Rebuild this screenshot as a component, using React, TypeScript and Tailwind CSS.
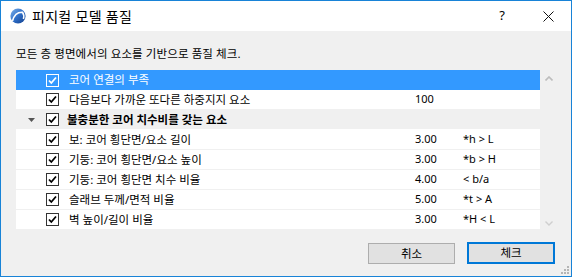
import { Fragment } from "react";

type Row = {
  label: string;
  value?: string;
  expr?: string;
  selected?: boolean;
  group?: boolean;
  child?: boolean;
};

const ROWS: Row[] = [
  { label: "코어 연결의 부족", selected: true },
  { label: "다음보다 가까운 또다른 하중지지 요소", value: "100" },
  { label: "불충분한 코어 치수비를 갖는 요소", group: true },
  { label: "보: 코어 횡단면/요소 길이", value: "3.00", expr: "*h > L", child: true },
  { label: "기둥: 코어 횡단면/요소 높이", value: "3.00", expr: "*b > H", child: true },
  { label: "기둥: 코어 횡단면 치수 비율", value: "4.00", expr: "< b/a", child: true },
  { label: "슬래브 두께/면적 비율", value: "5.00", expr: "*t > A", child: true },
  { label: "벽 높이/길이 비율", value: "3.00", expr: "*H < L", child: true },
];

function CheckBox({ light }: { light?: boolean }) {
  return (
    <span
      className={`flex h-[13px] w-[13px] items-center justify-center border ${
        light ? "border-white" : "border-[#333] bg-white"
      }`}
    >
      <svg width="11" height="11" viewBox="0 0 11 11">
        <path
          d="M2 5.5 L4.3 8 L9 2.5"
          fill="none"
          stroke={light ? "#fff" : "#000"}
          strokeWidth="1.8"
        />
      </svg>
    </span>
  );
}

function Logo() {
  return (
    <svg width="16" height="16" viewBox="0 0 16 16">
      <defs>
        <linearGradient id="lg" x1="0" y1="0" x2="1" y2="1">
          <stop offset="0" stopColor="#7fb2ea" />
          <stop offset="0.5" stopColor="#2f6fc8" />
          <stop offset="1" stopColor="#123f8c" />
        </linearGradient>
      </defs>
      <circle cx="8" cy="8" r="7.6" fill="url(#lg)" />
      <path d="M2.5 13 C4 7 8 4 12.5 4.2 C13.8 6 14 9 13.4 11" fill="none" stroke="#fff" strokeWidth="1.6" />
    </svg>
  );
}

export default function App() {
  return (
    <div className="flex h-[277px] w-[572px] flex-col border border-[#1883d7] font-['Noto_Sans','Noto_Sans_CJK_KR',sans-serif] text-black">
      {/* title bar */}
      <div className="flex h-[30px] items-center bg-white pl-[9px]">
        <Logo />
        <span className="ml-[6px] text-[14px] tracking-[0.3px]">피지컬 모델 품질</span>
        <span className="ml-auto w-[46px] text-center text-[13px]">?</span>
        <span className="flex w-[46px] items-center justify-center">
          <svg width="11" height="11" viewBox="0 0 11 11">
            <path d="M0.5 0.5 L10.5 10.5 M10.5 0.5 L0.5 10.5" stroke="#111" strokeWidth="1" />
          </svg>
        </span>
      </div>

      <div className="relative flex flex-1 flex-col bg-[#f0f0f0] pl-[15px]">
        <p className="mt-[15px] h-[16px] text-[11.5px] leading-[16px] tracking-[0.1px]">
          모든 층 평면에서의 요소를 기반으로 품질 체크.
        </p>

        <div className="mt-[8px] flex">
          <div className="w-[524px]">
            {ROWS.map((r, i) => (
              <Fragment key={i}>
                <div
                  className={`flex h-[20px] items-center text-[11.5px] ${
                    r.selected
                      ? "bg-[#3399ff] text-white"
                      : r.group
                      ? "border-b border-white bg-[#f0f0f0] font-bold"
                      : "border-b border-[#f0f0f0] bg-white"
                  }`}
                >
                  <span className="flex w-[30px] justify-center">
                    {r.group && (
                      <svg width="7" height="4" viewBox="0 0 7 4">
                        <path d="M0 0 L7 0 L3.5 4 Z" fill="#555" />
                      </svg>
                    )}
                  </span>
                  <CheckBox light={r.selected} />
                  <span className={r.group ? "ml-[8px] w-[348px]" : "ml-[10px] w-[346px]"}>
                    {r.label}
                  </span>
                  <span className="w-[48px] text-[11px]">{r.value}</span>
                  <span className="text-[11px]">{r.expr}</span>
                </div>
              </Fragment>
            ))}
          </div>
          <div className="flex w-[17px] flex-col items-center justify-between pt-[6px] pb-[4px]">
            <svg width="8" height="5" viewBox="0 0 8 5">
              <path d="M0.5 4.5 L4 1 L7.5 4.5" fill="none" stroke="#bdbdbd" strokeWidth="1.6" />
            </svg>
            <svg width="8" height="5" viewBox="0 0 8 5">
              <path d="M0.5 0.5 L4 4 L7.5 0.5" fill="none" stroke="#cfcfcf" strokeWidth="1.4" />
            </svg>
          </div>
        </div>

        <div className="mt-[12px] flex justify-end gap-[12px] pr-[16px]">
          <button className="mt-[1px] h-[21px] w-[87px] border border-[#adadad] bg-[#e1e1e1] text-[11.5px]">
            취소
          </button>
          <button className="h-[22px] w-[88px] border-2 border-[#0078d7] bg-[#e1e1e1] text-[11.5px]">
            체크
          </button>
        </div>

        <svg className="absolute right-[1px] bottom-[1px]" width="10" height="10" viewBox="0 0 10 10">
          <g fill="#b5b5b5">
            <rect x="7" y="1" width="2" height="2" />
            <rect x="4" y="4" width="2" height="2" />
            <rect x="7" y="4" width="2" height="2" />
            <rect x="1" y="7" width="2" height="2" />
            <rect x="4" y="7" width="2" height="2" />
            <rect x="7" y="7" width="2" height="2" />
          </g>
        </svg>
      </div>
    </div>
  );
}
